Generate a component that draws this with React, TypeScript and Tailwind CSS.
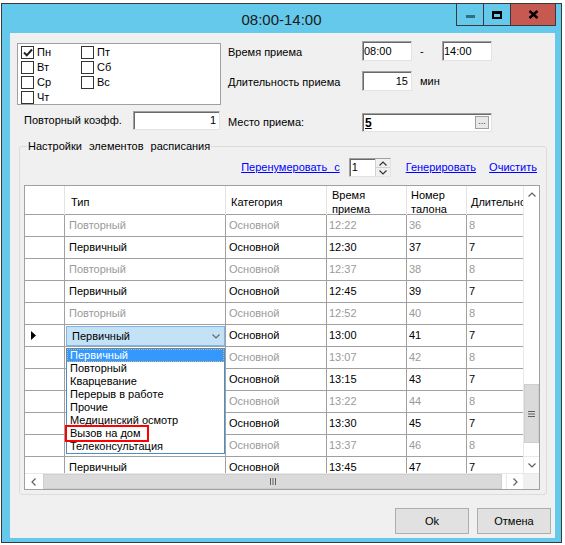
import React from "react";

type Row = { type: string; time: string; num: string; dur: string; muted: boolean };

const times = ["12:22", "12:30", "12:37", "12:45", "12:52", "13:00", "13:07", "13:15", "13:22", "13:30", "13:37", "13:45"];

const rows: Row[] = times.map((time, i) => ({
  type: i % 2 === 0 ? "Повторный" : "Первичный",
  time,
  num: String(36 + i),
  dur: i % 2 === 0 ? "8" : "7",
  muted: i % 2 === 0,
}));

const options = ["Первичный", "Повторный", "Кварцевание", "Перерыв в работе", "Прочие", "Медицинский осмотр", "Вызов на дом", "Телеконсультация"];

const cols = "grid grid-cols-[40px_161px_101px_80px_60px_56px]";
const sunken = "border border-t-[#a0a0a0] border-l-[#a0a0a0] border-r-[#e3e3e3] border-b-[#e3e3e3] shadow-[inset_1px_1px_0_#696969] bg-white";

function Check({ checked, label }: { checked?: boolean; label: string }) {
  return (
    <div className="flex items-center h-[15px]">
      <span className="w-[13px] h-[13px] border border-[#333] bg-white flex items-center justify-center">
        {checked && (
          <svg width="10" height="9" viewBox="0 0 10 9">
            <path d="M1 4.5 L3.8 7.3 L9 1.5" fill="none" stroke="#222" strokeWidth="2" />
          </svg>
        )}
      </span>
      <span className="ml-[3px]">{label}</span>
    </div>
  );
}

function Chevron({ up, color = "#606060" }: { up?: boolean; color?: string }) {
  return (
    <svg width="8" height="5" viewBox="0 0 8 5">
      <path d={up ? "M0.5 4.5 L4 1 L7.5 4.5" : "M0.5 0.5 L4 4 L7.5 0.5"} fill="none" stroke={color} strokeWidth="1.2" />
    </svg>
  );
}

function ChevronH({ right }: { right?: boolean }) {
  return (
    <svg width="5" height="8" viewBox="0 0 5 8">
      <path d={right ? "M0.5 0.5 L4 4 L0.5 7.5" : "M4.5 0.5 L1 4 L4.5 7.5"} fill="none" stroke="#606060" strokeWidth="1.2" />
    </svg>
  );
}

export default function App() {
  return (
    <div className="w-[565px] h-[545px] bg-white overflow-hidden font-['Liberation_Sans',Arial,sans-serif] text-[11px] text-black leading-none">
      <div className="ml-[1px] mt-[3px] w-[561px] h-[540px] border border-[#3a3a3a] bg-[#64c9ea] flex flex-col">
        {/* title bar */}
        <div className="h-[29px] grid grid-cols-[1fr_auto_1fr] shrink-0">
          <div />
          <div className="text-[15px] text-[#1a1a1a] pt-[8px]">08:00-14:00</div>
          <div className="flex justify-end items-start mr-[5px] -mt-[1px]">
            <div className="w-[28px] h-[23px] border border-[#3a3a3a] flex items-end justify-center pb-[7px]">
              <span className="w-[9px] h-[3px] bg-[#2f6f86]" />
            </div>
            <div className="w-[27px] h-[23px] border border-l-0 border-[#3a3a3a] flex items-center justify-center">
              <span className="w-[10px] h-[8px] border-[2px] border-t-[3px] border-black" />
            </div>
            <div className="w-[45px] h-[23px] border border-l-0 border-[#3a3a3a] bg-[#c75a50] flex items-center justify-center">
              <svg width="11" height="9" viewBox="0 0 11 9">
                <path d="M1.5 1 L9.5 8 M9.5 1 L1.5 8" stroke="#000" strokeWidth="2.4" />
              </svg>
            </div>
          </div>
        </div>

        {/* client */}
        <div className="ml-[8px] mr-[6px] mb-[4px] flex-1 bg-[#f0f0f0] flex flex-col">
          <div className="flex pt-[8px]">
            <div className="ml-[7px]">
              <div className="mt-[2px] w-[204px] h-[62px] border border-[#a0a0a0] bg-white pl-[3px] pt-[1px] grid grid-cols-[60px_1fr]">
                <div className="flex flex-col">
                  <Check checked label="Пн" />
                  <Check label="Вт" />
                  <Check label="Ср" />
                  <Check label="Чт" />
                </div>
                <div className="flex flex-col">
                  <Check label="Пт" />
                  <Check label="Сб" />
                  <Check label="Вс" />
                </div>
              </div>
              <div className="mt-[6px] flex items-center">
                <span className="pl-[7px] w-[116px]">Повторный коэфф.</span>
                <div className={`${sunken} w-[87px] h-[19px] flex items-center justify-end pr-[3px]`}>1</div>
              </div>
            </div>

            <div className="ml-[7px] flex flex-col">
              <div className="h-[20px] flex items-center">
                <span className="w-[134px] pt-[3px]">Время приема</span>
                <div className={`${sunken} w-[50px] h-[20px] flex items-center pl-[1px]`}>08:00</div>
                <span className="ml-[8px] w-[22px]">-</span>
                <div className={`${sunken} w-[50px] h-[20px] flex items-center pl-[1px]`}>14:00</div>
              </div>
              <div className="mt-[10px] h-[20px] flex items-center">
                <span className="w-[134px] pt-[2px]">Длительность приема</span>
                <div className={`${sunken} w-[50px] h-[20px] flex items-center justify-end pr-[3px]`}>15</div>
                <span className="ml-[8px]">мин</span>
              </div>
              <div className="mt-[22px] h-[19px] flex items-center">
                <span className="w-[134px]">Место приема:</span>
                <div className={`${sunken} w-[130px] h-[19px] flex items-center justify-between pl-[2px] pr-[2px]`}>
                  <span className="font-bold text-[12px] underline">5</span>
                  <span className="w-[14px] h-[13px] border border-[#a0a0a0] bg-[#e8e8e8] flex items-end justify-center pb-[2px] text-[9px] text-[#333]">...</span>
                </div>
              </div>
            </div>
          </div>

          {/* schedule group */}
          <fieldset className="mt-[8px] ml-[9px] w-[528px] border border-[#dcdcdc] rounded-[3px] pb-[4px]">
            <legend className="ml-[7px] px-[1px] leading-[13px] [word-spacing:4px]">Настройки элементов расписания</legend>
            <div className="mt-[5px] h-[19px] flex items-center justify-end pr-[9px]">
              <span className="text-[#0000ff] underline [word-spacing:4px]">Перенумеровать с</span>
              <div className={`${sunken} ml-[9px] w-[42px] h-[19px] flex`}>
                <span className="flex-1 flex items-center pl-[2px]">1</span>
                <div className="w-[15px] flex flex-col bg-[#f0f0f0] border-l border-[#d0d0d0]">
                  <span className="flex-1 flex items-center justify-center border-b border-[#d0d0d0]"><Chevron up color="#333" /></span>
                  <span className="flex-1 flex items-center justify-center"><Chevron color="#333" /></span>
                </div>
              </div>
              <span className="ml-[15px] text-[#0000ff] underline">Генерировать</span>
              <span className="ml-[13px] text-[#0000ff] underline">Очистить</span>
            </div>

            {/* grid */}
            <div className="mt-[8px] ml-[4px] w-[516px] border border-[#a0a0a0] flex flex-col bg-white">
              <div className="flex">
                <div className="w-[498px] flex flex-col">
                  <div className={`${cols} h-[29px] border-b border-[#a0a0a0]`}>
                    <div className="border-r border-[#e3e3e3]" />
                    <div className="border-r border-[#e3e3e3] flex items-center pl-[6px] pt-[3px]">Тип</div>
                    <div className="border-r border-[#e3e3e3] flex items-center pl-[5px] pt-[3px]">Категория</div>
                    <div className="border-r border-[#e3e3e3] flex items-center pl-[5px] pt-[2px] leading-[14px]">Время<br />приема</div>
                    <div className="border-r border-[#e3e3e3] flex items-center pl-[4px] pt-[2px] leading-[14px]">Номер<br />талона</div>
                    <div className="flex items-center pl-[4px] pt-[3px] whitespace-nowrap overflow-hidden">Длительно</div>
                  </div>
                  <div className="h-[258px] overflow-hidden relative">
                    {rows.map((r, i) => {
                      const tone = r.muted ? "text-[#9a9a9a]" : "text-black";
                      const sel = i === 5;
                      const covered = i > 5 && i < 11;
                      return (
                        <div key={i} className={`${cols} h-[22px] border-b border-[#a0a0a0]`}>
                          <div className="border-r border-[#a0a0a0] flex items-center pl-[6px]">
                            {sel && (
                              <svg width="5" height="9" viewBox="0 0 5 9">
                                <path d="M0 0 L5 4.5 L0 9 Z" fill="#000" />
                              </svg>
                            )}
                          </div>
                          {sel ? (
                            <div className="border-r border-[#a0a0a0] pl-[1px] pt-[1px]">
                              <div className="h-full border border-[#7eb4ea] bg-[#c4e2f6] flex items-center justify-between pl-[5px] pr-[4px]">
                                <span>{r.type}</span>
                                <Chevron color="#666" />
                              </div>
                            </div>
                          ) : (
                            <div className={`border-r border-[#a0a0a0] flex items-center pl-[4px] ${tone}`}>{covered ? "" : r.type}</div>
                          )}
                          <div className={`border-r border-[#a0a0a0] flex items-center pl-[3px] ${tone}`}>Основной</div>
                          <div className={`border-r border-[#a0a0a0] flex items-center pl-[2px] ${tone}`}>{r.time}</div>
                          <div className={`border-r border-[#a0a0a0] flex items-center pl-[2px] ${tone}`}>{r.num}</div>
                          <div className={`flex items-center pl-[2px] ${tone}`}>{r.dur}</div>
                        </div>
                      );
                    })}

                    {/* open combo list */}
                    <div className="absolute left-[41px] top-[133px] w-[159px] h-[106px] border border-[#4a8fc9] bg-white">
                      {options.map((o, i) => (
                        <div
                          key={o}
                          className={`relative h-[13px] leading-[13px] pl-[3px] whitespace-nowrap ${
                            i === 0 ? "bg-[#3399ff] text-white outline-1 outline-dotted outline-[#e6b060] -outline-offset-1" : "text-black"
                          }`}
                        >
                          {o}
                          {i === 6 && <span className="absolute -left-[2px] -top-[2px] w-[84px] h-[17px] border-2 border-[#ff0000]" />}
                        </div>
                      ))}
                    </div>
                  </div>
                </div>

                {/* vertical scrollbar */}
                <div className="w-[16px] h-[287px] flex flex-col border-l border-[#e8e8e8] bg-white">
                  <div className="h-[17px] flex items-center justify-center"><Chevron up /></div>
                  <div className="h-[181px]" />
                  <div className="h-[59px] bg-[#dadada] border border-[#cfcfcf] flex items-center justify-center">
                    <svg width="7" height="6" viewBox="0 0 7 6">
                      <path d="M0 0.5 H7 M0 3 H7 M0 5.5 H7" stroke="#606060" strokeWidth="1" />
                    </svg>
                  </div>
                  <div className="h-[13px]" />
                  <div className="h-[17px] flex items-center justify-center border-t border-[#e8e8e8]"><Chevron /></div>
                </div>
              </div>

              {/* horizontal scrollbar */}
              <div className="flex h-[16px] border-t border-[#e8e8e8]">
                <div className="w-[498px] flex bg-white">
                  <div className="w-[17px] flex items-center justify-center"><ChevronH /></div>
                  <div className="ml-[1px] w-[459px] bg-[#dadada] border border-[#cfcfcf] flex items-center justify-center">
                    <svg width="6" height="7" viewBox="0 0 6 7">
                      <path d="M0.5 0 V7 M3 0 V7 M5.5 0 V7" stroke="#606060" strokeWidth="1" />
                    </svg>
                  </div>
                  <div className="w-[4px]" />
                  <div className="w-[17px] flex items-center justify-center border-l border-[#e8e8e8]"><ChevronH right /></div>
                </div>
                <div className="w-[16px] bg-[#f0f0f0]" />
              </div>
            </div>
          </fieldset>

          {/* buttons */}
          <div className="mt-[13px] flex justify-end pr-[4px] gap-[8px]">
            <div className="w-[74px] h-[26px] bg-[#e1e1e1] border border-[#adadad] flex items-center justify-center">Ok</div>
            <div className="w-[74px] h-[26px] bg-[#e1e1e1] border border-[#adadad] flex items-center justify-center">Отмена</div>
          </div>
        </div>
      </div>
    </div>
  );
}
